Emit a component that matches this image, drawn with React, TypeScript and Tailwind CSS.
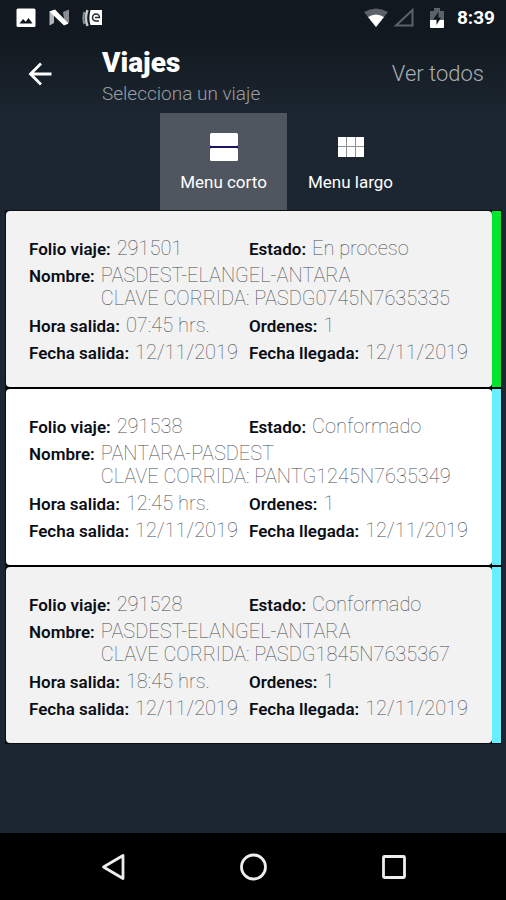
import { FC, ReactNode } from "react";

type Trip = {
  folio: string;
  status: string;
  name: string;
  route: string;
  time: string;
  orders: number;
  departure: string;
  arrival: string;
  active?: boolean;
};

const trips: Trip[] = [
  {
    folio: "291501",
    status: "En proceso",
    name: "PASDEST-ELANGEL-ANTARA",
    route: "PASDG0745N7635335",
    time: "07:45 hrs.",
    orders: 1,
    departure: "12/11/2019",
    arrival: "12/11/2019",
    active: true,
  },
  {
    folio: "291538",
    status: "Conformado",
    name: "PANTARA-PASDEST",
    route: "PANTG1245N7635349",
    time: "12:45 hrs.",
    orders: 1,
    departure: "12/11/2019",
    arrival: "12/11/2019",
  },
  {
    folio: "291528",
    status: "Conformado",
    name: "PASDEST-ELANGEL-ANTARA",
    route: "PASDG1845N7635367",
    time: "18:45 hrs.",
    orders: 1,
    departure: "12/11/2019",
    arrival: "12/11/2019",
  },
];

const StatusBar: FC = () => (
  <div className="flex h-9 items-center justify-between pl-4 pr-[11px] text-white">
    <div className="flex items-center gap-3">
      <svg width="20" height="20" viewBox="0 0 20 20">
        <path
          fill="#fff"
          fillRule="evenodd"
          d="M2 0.500h16a1.500 1.500 0 0 1 1.500 1.500v15.500a1.500 1.500 0 0 1-1.500 1.500H2a1.500 1.500 0 0 1-1.500-1.500V2A1.500 1.500 0 0 1 2 .5ZM3.500 15.500h13l-4-5.500-2.700 3.800L7 11Z"
        />
      </svg>
      <svg width="22" height="20" viewBox="0 0 22 20">
        <path fill="#b4b7ba" d="M1.500 3.500 6 2v13l-4.500 2.500Z" />
        <path fill="#8a8e92" d="M15 4l6-2.500v13L17 17Z" />
        <path fill="#fff" d="M1.500 3.500 7 1.500 20.500 15.500l-4.500 2Z" />
      </svg>
      <svg width="22" height="20" viewBox="0 0 22 20" fill="none">
        <path d="M2.500 4C1 7 1 13 2.500 16" stroke="#8a8e92" strokeWidth="2" />
        <path d="M5.500 2C3.500 7 3.500 13 5.500 18" stroke="#c5c8ca" strokeWidth="2.500" />
        <path fill="#fff" d="M8.500 2H20v15H8.500C7 13 7 7 8.500 2Z" />
        <path
          d="M17 13h-3a3.500 3.500 0 1 1 3.500-3.500H13"
          stroke="#20272e"
          strokeWidth="1.500"
        />
      </svg>
    </div>
    <div className="flex items-center">
      <svg width="26" height="20" viewBox="0 0 26 20">
        <path fill="#5b6268" d="M1 4Q13-3 25 4L13 19Z" />
        <path fill="#fff" d="M5 9Q13 4 21 9l-8 10Z" />
      </svg>
      <svg className="ml-1" width="22" height="20" viewBox="0 0 22 20">
        <path d="M3 17.500 19.500 2v15.500Z" fill="none" stroke="#5b6268" strokeWidth="2" />
      </svg>
      <svg className="ml-3.5" width="16" height="22" viewBox="0 0 16 22">
        <path fill="#5b6268" d="M1 4h4V1h6v3h4v9H1Z" />
        <path fill="#fff" d="M1 13h14v7a1 1 0 0 1-1 1H2a1 1 0 0 1-1-1Z" />
        <path fill="#11181f" d="M9.500 5 4 12.500h3.500V18l4.500-7.500H9.500Z" />
      </svg>
      <span className="ml-3 text-[19px] font-bold">8:39</span>
    </div>
  </div>
);

const Header: FC = () => (
  <header className="flex h-[77px] items-start pl-6 pr-[22px]">
    <button type="button" aria-label="Atrás" className="mt-6">
      <svg width="32" height="28" viewBox="0 0 32 28" fill="none">
        <path d="M27.500 14H7M17 3.500 6.500 14 17 24.500" stroke="#fff" strokeWidth="2.800" />
      </svg>
    </button>
    <div className="ml-[46px] mt-3 flex-1">
      <h1 className="text-[28px] leading-[30px] font-black text-white">Viajes</h1>
      <p className="text-[19px] leading-8 font-light text-[#9a9fa4]">Selecciona un viaje</p>
    </div>
    <button type="button" className="mt-6 text-[22px] leading-7 font-light text-[#a9adb1]">
      Ver todos
    </button>
  </header>
);

const Tabs: FC = () => (
  <nav className="flex justify-center pl-[68px]">
    <button
      type="button"
      className="flex h-[98px] w-[127px] flex-col items-center bg-[#4f565f] pt-[19px] text-[17px] leading-6 text-white"
    >
      <svg width="30" height="30" viewBox="0 0 30 30">
        <rect x="1" y="14" width="28" height="2" fill="#1b1464" />
        <rect x="1" y="1" width="28" height="13" rx="1.500" fill="#fff" />
        <rect x="1" y="16" width="28" height="13" rx="1.500" fill="#fff" />
      </svg>
      <span className="mt-2">Menu corto</span>
    </button>
    <button
      type="button"
      className="flex h-[98px] w-[127px] flex-col items-center pt-[19px] text-[17px] leading-6 text-white"
    >
      <svg width="30" height="30" viewBox="0 0 30 30">
        <rect x="2" y="5" width="26" height="20" fill="#8d9094" />
        <g fill="#fff">
          <rect x="2" y="5" width="8" height="9" />
          <rect x="11" y="5" width="8" height="9" />
          <rect x="20" y="5" width="8" height="9" />
          <rect x="2" y="15" width="8" height="10" />
          <rect x="11" y="15" width="8" height="10" />
          <rect x="20" y="15" width="8" height="10" />
        </g>
      </svg>
      <span className="mt-2">Menu largo</span>
    </button>
  </nav>
);

const Field: FC<{ label: string; wide?: boolean; children: ReactNode }> = ({
  label,
  wide,
  children,
}) => (
  <div className={`flex items-baseline gap-1.5 whitespace-nowrap ${wide ? "col-span-2" : ""}`}>
    <dt className="text-[17px] leading-5 font-semibold text-[#0b0e15]">{label}:</dt>
    <dd className="text-xl leading-[23px] font-thin text-[#45484c]">{children}</dd>
  </div>
);

const TripCard: FC<{ trip: Trip; shaded: boolean }> = ({ trip, shaded }) => (
  <li className="flex bg-black">
    <dl
      className={`grid flex-1 grid-cols-2 gap-y-1 rounded px-[23px] pt-[26px] pb-[23px] ${
        shaded ? "bg-[#f2f2f2]" : "bg-white"
      }`}
    >
      <Field label="Folio viaje">{trip.folio}</Field>
      <Field label="Estado">{trip.status}</Field>
      <Field label="Nombre" wide>
        {trip.name}
        <br />
        CLAVE CORRIDA: {trip.route}
      </Field>
      <Field label="Hora salida">{trip.time}</Field>
      <Field label="Ordenes">{trip.orders}</Field>
      <Field label="Fecha salida">{trip.departure}</Field>
      <Field label="Fecha llegada">{trip.arrival}</Field>
    </dl>
    <div className={`w-[9px] ${trip.active ? "bg-[#00e52e]" : "bg-[#66f0ff]"}`} />
  </li>
);

const NavBar: FC = () => (
  <footer className="flex h-[67px] items-center justify-center gap-[108px] bg-black">
    <button type="button" aria-label="Volver">
      <svg width="32" height="32" viewBox="0 0 32 32" fill="none">
        <path d="M26 4.500v23L6.500 16Z" stroke="#eee" strokeWidth="2.800" strokeLinejoin="round" />
      </svg>
    </button>
    <button type="button" aria-label="Inicio">
      <svg width="32" height="32" viewBox="0 0 32 32" fill="none">
        <circle cx="16.500" cy="16" r="12" stroke="#eee" strokeWidth="2.800" />
      </svg>
    </button>
    <button type="button" aria-label="Recientes">
      <svg width="32" height="32" viewBox="0 0 32 32" fill="none">
        <rect x="6.500" y="5.500" width="21" height="21" rx="1" stroke="#eee" strokeWidth="2.800" />
      </svg>
    </button>
  </footer>
);

const App: FC = () => (
  <div className="flex min-h-screen flex-col bg-[#1c2630] font-[Roboto,sans-serif]">
    <div className="bg-linear-to-b from-[#11181f] from-30% to-[#1c2630]">
      <StatusBar />
      <Header />
    </div>
    <Tabs />
    <main className="flex-1 pr-[5px] pl-1.5">
      <ul className="flex flex-col gap-0.5 bg-black ring-1 ring-[#0b0f14]">
        {trips.map((trip, i) => (
          <TripCard key={trip.folio} trip={trip} shaded={i % 2 === 0} />
        ))}
      </ul>
    </main>
    <NavBar />
  </div>
);

export default App;
